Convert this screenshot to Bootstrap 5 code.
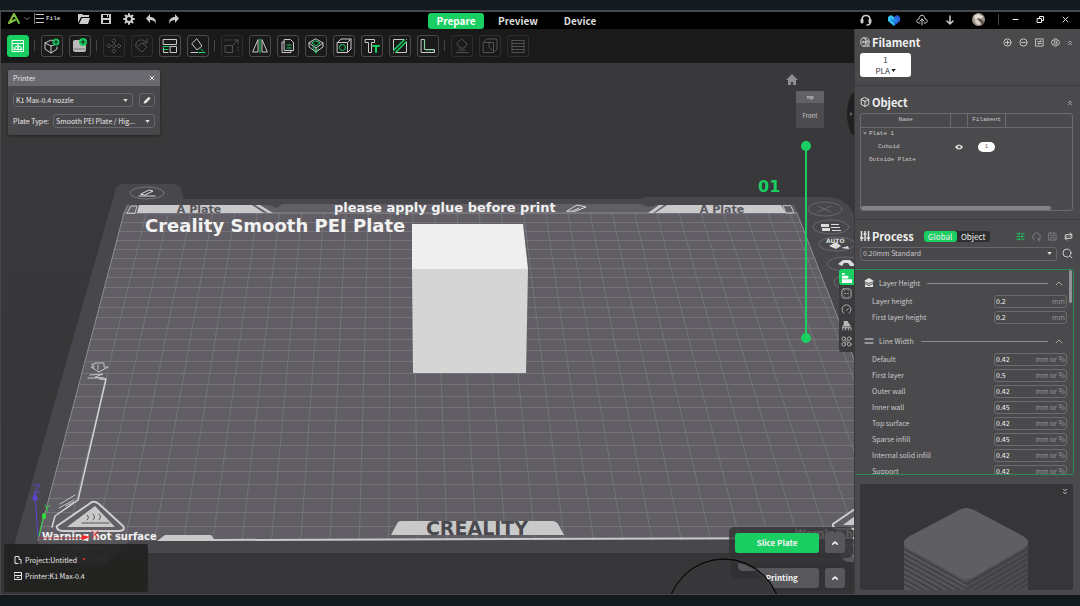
<!DOCTYPE html>
<html lang="en">
<head>
<meta charset="utf-8">
<meta name="viewport" content="width=device-width, initial-scale=1">
<title>Creality Print</title>
<link href="https://cdn.jsdelivr.net/npm/bootstrap@5.3.0/dist/css/bootstrap.min.css" rel="stylesheet">
<style>
:root{--grn:#19cf61;--pan:#4a494c;--lin:#6c6b6f;--txt:#c9c9cb}
body{height:100vh;background:#131a1d;color:#e8e8e8;font:8px/12px "Noto Sans CJK SC","Noto Sans",sans-serif;overflow:hidden;padding:10px 0 11px}
button,input,select{font:inherit;color:inherit}
button{background:none;border:0;padding:0}
svg{display:block;fill:none;stroke-linecap:round;stroke-linejoin:round}
svg:not([stroke]){stroke:currentColor}
.app{border:1px solid #48484a;border-top-width:2px;border-right:0;background:#39383a}
.titlebar{display:grid;grid-template-columns:427px auto 1fr;height:17px;background:#000}
.ti{width:12px;height:12px;color:#ccc}
.mono{font-family:"Liberation Mono",monospace;font-size:6px}
.tab{width:56px;height:16px;font-size:10px;line-height:14px;font-weight:700;border-radius:3px;color:#ddd}
.tab.on{background:var(--grn);color:#fff}
.tools{height:34px;background:#1a1a1a;gap:6px;padding:0 6px 1px}
.tool{width:22px;height:22px;border:1px solid #4b4b4b;border-radius:3px;color:#c9c9c9;flex:none;display:grid;place-items:center}
.tool svg{width:16px;height:16px}
.tool.on{background:var(--grn);border-color:var(--grn);color:#fff}
.tool:disabled{border-color:#2e2e2e;color:#515151}
.sep{width:1px;height:11px;background:#464646;margin-left:-1px;flex:none}
.g{stroke:var(--grn)}
.fw,svg.fw:not([stroke]){fill:currentColor;stroke:none}
.view{background:linear-gradient(#39383a,#363537);min-height:0}
.scene text{font-family:"DejaVu Sans",sans-serif;font-weight:700;stroke:none}
.float{position:absolute}
.printer,.info,.params,.preset{font-size:7px}
.printer{left:7px;top:7px;width:152px;height:65px;background:#48474a;border-radius:2px;box-shadow:0 1px 3px #0006}
.printer header{height:16px;background:#6a696f;padding:0 5px;border-radius:2px 2px 0 0}
.pline{padding:0 5px;margin-top:7px}
.pick{appearance:none;height:14px;border:1px solid #67666a;border-radius:3px;padding:0 10px 0 2px;line-height:11px;min-width:0;background:#48474a url("data:image/svg+xml,%3Csvg xmlns='http://www.w3.org/2000/svg' viewBox='0 0 6 4'%3E%3Cpath fill='%23ddd' d='M0 0h6L3 4z'/%3E%3C/svg%3E") no-repeat right 4px center/5px 3px}
.info{left:3px;bottom:2px;width:144px;height:48px;background:#20201ed9;padding:10px;border-radius:2px}
.info svg{width:8px;height:8px}
.home{right:56px;top:11px;width:12px;height:11px;color:#8e8d91}
.cube{right:30px;top:28px;width:28px;text-align:center;font-size:6px;color:#c5c5c7;background:#4c4b4e}
.cube b{display:block;height:12px;background:#626166;font-size:4px}
.cube span{display:block;height:25px;line-height:25px}
.knob{right:0;top:30px;width:7px;height:42px;overflow:hidden}
.zbar{right:43px;top:78px;width:10px;height:202px}
.zbar input{position:absolute;left:0;top:202px;width:202px;height:10px;margin:0;appearance:none;background:none;transform-origin:0 0;transform:rotate(-90deg);pointer-events:none}
.zbar input::-webkit-slider-runnable-track{height:2px;background:var(--grn)}
.zbar input::-webkit-slider-thumb{appearance:none;width:10px;height:10px;border-radius:50%;background:var(--grn);margin-top:-4px;pointer-events:auto}
.modes{right:0;top:206px;width:15px;background:#3b3a3c;border-radius:3px 0 0 3px;padding-bottom:3px}
.modes button{width:15px;height:16px;display:grid;place-items:center;color:#b9b9bb}
.modes svg{width:11px;height:11px}
.modes .on{background:var(--grn);color:#fff;border-radius:3px 0 0 3px}
.acts{right:1px;bottom:1px;width:124px;gap:4px}
.act{background:#333235cc;border-radius:5px;padding:6px 8px 5px 6px;gap:6px}
.act button{height:20px;border-radius:3px;background:#58575b;font-weight:700;color:#f2f2f2;line-height:14px}
.act .go{background:var(--grn)}
.act .up{width:20px;display:grid;place-items:center}
.up svg{width:6px;height:4px;stroke-width:2}
.ring{right:72px;bottom:0;width:116px;height:36px;pointer-events:none}
.side{width:226px;background:var(--pan);border-left:1px solid #3a393c;color:var(--txt)}
.side h2{font-size:11px;line-height:16px;font-weight:700;margin:0 0 0 2px;color:#f1f1f1}
.hi{width:10px;height:10px;color:#e4e4e4;flex:none}
.si{width:9px;height:9px;color:#cfcfcf}
.sec{padding:0 7px 0 5px}
.rule{border-bottom:1px solid #3e3d40}
.fil{width:51px;height:24px;background:#fff;color:#333;border-radius:3px;line-height:11px}
.objs{height:98px;border:1px solid var(--lin);border-radius:3px}
.objs table{width:100%;border-collapse:collapse;table-layout:fixed}
.objs th{height:13px;font-weight:400;text-align:center;border-right:1px solid var(--lin);border-bottom:1px solid var(--lin);padding:0;line-height:8px}
.objs th:last-child{border-right:0}
.objs td{height:13px;padding:0;line-height:8px}
.chip{display:block;width:17px;height:10px;line-height:10px;border-radius:5px;background:#fff;color:#765;text-align:center;margin:0 auto}
.hbar{width:190px;height:4px;border-radius:2px;background:#858488}
.seg{background:#2f2e30;border-radius:3px;line-height:11px}
.seg button{width:33px;height:11px;border-radius:3px;line-height:9px;color:#eee}
.seg .on{background:var(--grn)}
.params{height:206px;border:1px solid #2d8a50;border-left:0;overflow:hidden;margin-right:6px;border-radius:0 2px 2px 0}
.vbar{right:1px;top:0;width:3px;height:33px;background:#939296;border-radius:2px}
.grp{height:20px;padding:0 10px 0 9px;gap:7px}
.grp hr{margin:0;flex:1;border-color:#8b8a8e;opacity:1}
.grp button{color:#aaa}
.prm{height:16px;padding:0 6px 0 17px}
.val{width:73px;height:13px;border:1px solid var(--lin);border-radius:3px;padding:0 1px;color:#98979b;line-height:11px}
.val input{width:28px;border:0;background:none;padding:0;height:11px;color:#f4f4f4}
.prev{background:#363538;border-radius:3px;margin:9px 7px 4px 5px;min-height:0;overflow:hidden}
</style>
</head>
<body class="d-flex flex-column">
<svg width="0" height="0" class="position-absolute" aria-hidden="true">
<symbol id="dbl" viewBox="0 0 8 8"><path d="M2 4l2-2 2 2M2 7l2-2 2 2"/></symbol>
<symbol id="up" viewBox="0 0 8 5"><path d="M1 4l3-3 3 3"/></symbol>
<symbol id="box" viewBox="0 0 16 16"><path d="M8 1l6 3v8l-6 3-6-3V4zM2 4l6 3 6-3M8 7v8" stroke-width="1.500"/></symbol>
</svg>
<div class="app flex-fill d-flex flex-column overflow-hidden">
<nav class="titlebar">
 <div class="d-flex align-items-center pb-1" style="padding-left:7px">
  <button aria-label="App menu" class="d-flex align-items-center"><svg width="12" height="11" viewBox="0 0 12 11"><path d="M1 10L6 1l5 9M1 10l6-3" stroke="#78c238" stroke-width="2"/><path d="M6 1L1 10" stroke="#b4b24a"/></svg><svg class="ms-1 me-1" width="6" height="5" viewBox="0 0 8 5" stroke="#aaa"><path d="M1 1l3 3 3-3"/></svg></button>
  <button class="d-flex align-items-center mono" style="color:#ccc"><svg width="10" height="11" viewBox="0 0 10 11"><path d="M.5 0v11" stroke="#777"/><path d="M2 1.500h8M2 5.500h8M2 9.500h8" stroke="#ccc"/></svg><b style="margin-left:2px">File</b></button>
  <button aria-label="Open" class="ti" style="margin-left:18px"><svg viewBox="0 0 12 12" class="fw"><path d="M0 1h4l1 1h6v2H3L0 10zM4 5h8l-2 6H1z"/></svg></button>
  <button aria-label="Save" class="ti" style="margin-left:10px"><svg viewBox="0 0 12 12" class="fw"><path fill-rule="evenodd" d="M1 1h10v10H1zM3 2v3h6V2zM3 7v3h6V7zM7 2h1v2H7z"/></svg></button>
  <button aria-label="Settings" class="ti" style="margin-left:11px"><svg viewBox="0 0 12 12"><circle cx="6" cy="6" r="3" stroke-width="2"/><path d="M6 1v1M6 10v1M1 6h1M10 6h1M2.500 2.500l1 1M8.500 8.500l1 1M2.500 9.500l1-1M8.500 3.500l1-1" stroke-width="2"/></svg></button>
  <button aria-label="Undo" class="ti" style="margin-left:10px"><svg viewBox="0 0 12 12" class="fw"><path d="M5 1v3c4 0 6 2 6 7-1-3-3-4-6-4v3L1 5.500z"/></svg></button>
  <button aria-label="Redo" class="ti" style="margin-left:11px"><svg viewBox="0 0 12 12" class="fw"><path d="M7 1v3c-4 0-6 2-6 7 1-3 3-4 6-4v3l4-4.500z"/></svg></button>
 </div>
 <div class="d-flex align-items-center" style="gap:6px"><button class="tab on">Prepare</button><button class="tab">Preview</button><button class="tab">Device</button></div>
 <div class="d-flex align-items-center justify-content-end" style="gap:16px;padding:0 10px 2px 0">
  <button aria-label="Support" class="ti"><svg viewBox="0 0 12 12"><path d="M2 6C2 0 10 0 10 6M10 9c0 1-1 2-3 2" stroke-width="1.500"/><path d="M2 6v2M10 6v2" stroke-width="3"/></svg></button>
  <button aria-label="Cloud" class="ti"><svg viewBox="0 0 12 12" stroke="none"><path fill="#35c3ef" d="M0 3l3-2 3 2 0 9-6-5z"/><path fill="#2b62d8" d="M6 3l3-2 3 2v4l-6 5z"/><path fill="#1a8ce6" d="M3 4l3 2 3-2v3L6 9 3 7z"/></svg></button>
  <button aria-label="Upload" class="ti"><svg viewBox="0 0 12 12"><path d="M4 9H3C0 9 0 5 3 5c0-5 6-5 6 0 3 0 3 4 0 4H8M6 11V5M4 7l2-2 2 2"/></svg></button>
  <button aria-label="Download" class="ti"><svg viewBox="0 0 12 12"><path d="M6 2v8M3 7l3 3 3-3" stroke-width="1.500"/></svg></button>
  <button aria-label="Account"><svg width="13" height="13" viewBox="0 0 14 14" stroke="none"><circle cx="7" cy="7" r="7" fill="#a3978b"/><path d="M2 3l5-2 5 3-2 2-4-1-2 3z" fill="#e4ded7"/><path d="M3 8l3-1 4 3-2 3-3-1z" fill="#d8cec4"/><path d="M6 6l4 1 3 3-2 2-3-3z" fill="#594c43"/></svg></button>
  <span class="sep" style="margin:0 -4px 0 -3px"></span>
  <button aria-label="Minimize"><svg width="9" height="9" viewBox="0 0 9 9" stroke="#fff"><path d="M2 4.500h5"/></svg></button>
  <button aria-label="Restore"><svg width="9" height="9" viewBox="0 0 9 9" stroke="#eee"><path d="M1.500 3.500h4v4h-4zM3.500 3V1.500h4v4H6"/></svg></button>
  <button aria-label="Close"><svg width="9" height="9" viewBox="0 0 9 9" stroke="#ddd"><path d="M2 2l5 5M7 2L2 7"/></svg></button>
 </div>
</nav>
<div class="flex-fill d-flex overflow-hidden">
<main class="flex-fill d-flex flex-column" style="min-width:0">
 <div class="tools d-flex align-items-center">
  <button class="tool on" aria-label="Printer"><svg viewBox="0 0 16 16"><path d="M2.500 2.500h11v11h-11zM3 5.500h10M8 6v2M4 11.500h8"/><path d="M4 10q4-4 8 0-4 4-8 0" /><circle cx="8" cy="10" r="1" class="fw"/></svg></button>
  <span class="sep"></span>
  <button class="tool" aria-label="Add model"><svg viewBox="0 0 16 16"><path d="M9 3L7 2 1 5v6l6 4 6-4V9M1 5l6 3 3-1M7 8v7"/><circle cx="12" cy="4" r="3.500" fill="#19cf61" stroke="none"/><path d="M12 2v4M10 4h4" stroke="#222"/></svg></button>
  <button class="tool" aria-label="Add plate"><svg viewBox="0 0 16 16"><rect x="1" y="2" width="13" height="12" rx="2" fill="#bbb" stroke="none"/><path d="M2 11h11" stroke="#777"/><circle cx="11" cy="4" r="4" fill="#19cf61" stroke="none"/><path d="M11 2v4M9 4h4" stroke="#222"/></svg></button>
  <span class="sep"></span>
  <button class="tool" disabled aria-label="Move"><svg viewBox="0 0 16 16"><path d="M8 1l2 2-2 2-2-2zM8 11l2 2-2 2-2-2zM3 6l2 2-2 2-2-2zM13 6l2 2-2 2-2-2zM8 6l2 2-2 2-2-2z"/></svg></button>
  <button class="tool" disabled aria-label="Rotate"><svg viewBox="0 0 16 16"><path d="M8 5l5 4-5 5-5-4zM2 9c-2-6 6-10 10-5M13 1v4H9"/></svg></button>
  <button class="tool" aria-label="Arrange"><svg viewBox="0 0 16 16"><path d="M1.500 1.500h13v5h-13zM8.500 8.500h6v6h-6zM1.500 10v4.500H6"/><path class="g" d="M1 8.500h6M1 11.500h5" /></svg></button>
  <button class="tool" aria-label="Lay flat"><svg viewBox="0 0 16 16"><path d="M7 1l5 7-5 4-5-6zM1 14.500h8"/><path class="g" d="M8 14.500h7M11 11l2 2"/></svg></button>
  <span class="sep"></span>
  <button class="tool" disabled aria-label="Scale"><svg viewBox="0 0 16 16"><path d="M1.500 7.500h7v7h-7zM9 7l5-5M10 2h4v4"/><path d="M1 2h7M14 9v6" stroke-dasharray="1 2"/></svg></button>
  <button class="tool" aria-label="Mirror"><svg viewBox="0 0 16 16"><path d="M6 2v12H1zM10 2v12h5z"/><path class="g" d="M8 1v14"/></svg></button>
  <button class="tool" aria-label="Clone"><svg viewBox="0 0 16 16"><path d="M4.500 1.500h6l3 3v8h-9zM4 4H2v10.500h9V13"/><path class="g" d="M7 7h4M7 10h4"/></svg></button>
  <button class="tool" aria-label="Split"><svg viewBox="0 0 16 16"><path d="M8 1l7 4-7 5-7-5zM1 5v4l7 5 7-5V5M8 10v4"/><path class="g" d="M8 3l4 2-4 3-4-3zM5 9l2 5M10 11l-2 4"/></svg></button>
  <button class="tool" aria-label="Hollow"><svg viewBox="0 0 16 16"><path d="M1.500 4.500h10v10h-10zM2 4l3-3h10v10l-3 3M12 4l3-3"/><circle class="g" cx="6.500" cy="9.500" r="3"/></svg></button>
  <button class="tool" aria-label="Text"><svg viewBox="0 0 16 16"><path d="M1.500 1.500h9v3h-3v10h-3v-10h-3z"/><path class="g" d="M9 8h6M12 8v6" stroke-width="2"/></svg></button>
  <button class="tool" aria-label="Cut"><svg viewBox="0 0 16 16"><path d="M1.500 12V1.500H12M4 14.500h10.500V4M1.500 14.500v0M14.500 1.500v0"/><path class="g" d="M2 12L12 2M4 14L14 4" stroke-width="1.500"/></svg></button>
  <button class="tool" aria-label="Measure"><svg viewBox="0 0 16 16"><path d="M1.500 1.500h3v10h10v3h-13z"/><path class="g" d="M4 4h1M4 7h1M4 10h1M7 12v1M10 12v1M13 12v1"/></svg></button>
  <span class="sep"></span>
  <button class="tool" disabled aria-label="Supports"><svg viewBox="0 0 16 16"><path d="M8 1l5 5-3 4H6L3 6zM5 12h6M2 14.500h12"/></svg></button>
  <button class="tool" disabled aria-label="Seam"><svg viewBox="0 0 16 16"><path d="M1.500 4.500h10v10h-10zM2 4l3-3h10v10l-3 3M7 4v5l3 3"/></svg></button>
  <button class="tool" disabled aria-label="Layers"><svg viewBox="0 0 16 16"><path d="M2 2.500h12M2 5.500h12M2 8.500h12M2 11.500h12M2 14.500h12M2 2v12M14 2v12"/></svg></button>
 </div>
 <div class="view flex-fill position-relative overflow-hidden">
  <svg class="scene position-absolute w-100 h-100" viewBox="1 63 853 531" preserveAspectRatio="xMidYMin slice">
   <path d="M116 188Q118 184 125 184H174Q183 185 183 199H640L645 197H826Q846 197 853 213L990 553H28Q12 552 16 538Z" fill="#48474b" stroke="none"/>
   <path d="M124 213L128 205H270L277 208Q281 204 283 204H641L648 207 657 205H794L797 213 924 539 38 541Z" fill="#615f65" stroke="none"/>
   <g id="grid" stroke="#7a797e"></g>
   <path d="M38 540L124 213 128 205M797 213L924 539M124 213H797" stroke="#8d8c91"/>
   <g fill="#c9c9ca" stroke="none">
    <path d="M139 205H252L264 213H137zM255 205h5l13 8h-5zM667 205H781L786 213H655zM659 205h5l-11 8h-5z"/>
    <path d="M398 522Q399 521 402 521H552Q556 521 558 524L564 535H391zM157 541L165 535H211L214 539 854 537V539L214 541z"/>
   </g>
   <path d="M127 213l4-7h6l-2 7zM783 206l3 7h8l-3-7z" stroke="#c2c2c4"/>
   <g fill="#55545a"><text x="199" y="213" font-size="11" text-anchor="middle">A Plate</text><text x="722" y="213" font-size="11" text-anchor="middle">A Plate</text><text x="477" y="535" font-size="19" text-anchor="middle" fill="#4a494e">CREALITY</text></g>
   <g fill="#f2f2f2"><text x="334" y="212" font-size="13">please apply glue before print</text><text x="145" y="232" font-size="18">Creality Smooth PEI Plate</text><text x="42" y="540" font-size="10">Warning hot surface</text><text x="795" y="537" font-size="10">Warning h</text></g>
   <path d="M567 211l10-6 9 2-10 4zM573 211l6-3" stroke="#ddd"/>
   <text x="758" y="192" font-size="16" fill="#19cf61">01</text>
   <path d="M412 224H523L528 269H412z" fill="#eeefee" stroke="none"/><path d="M412 269H528L526 373H413z" fill="#d5d5d5" stroke="none"/>
   <ellipse cx="147" cy="193" rx="17" ry="6" stroke="#77767b"/><path d="M139 196h16M141 194l8-4 4 1-8 4z" stroke="#ddd"/>
   <path d="M100 379h6L78 500 55 516 52 527" stroke="#d2d2d3" stroke-width="1.500"/><path d="M92 364l3 0 0-1h9v4h4l-9 5-8-5h3zM98 365v4M90 375l13-1-8 3 9 1M88 378h12M60 504l15-9M59 508l15-8M66 506l8-4" stroke="#c5c5c8"/>
   <g id="warn"><path d="M92 502q3-1 7 2l24 22q3 5-5 5H62q-6-1-5-5z" fill="#615f65" stroke="#cfcfd0" stroke-width="2"/><path d="M95 506l20 21H67z" fill="#c9c9ca" stroke="none"/><path d="M87 515q3 2 0 5M93 514q3 3 0 6M99 514q3 3 0 6M82 523h27" stroke="#555"/></g>
   <use href="#warn" x="776" y="-2"/>
   <path d="M38 541H129L108 562Q106 565 102 565H52Q49 565 47 561z" fill="#56555a" stroke="none"/><path d="M52 548h58l-7 11H58zM64 555q3-9 16-9t16 9M68 557q2-8 12-8t11 8M72 558q1-6 8-6t7 6M77 558q2-4 5 0" stroke="#77767b"/>
   <path d="M826 539h28v23h-5q-4 0-6-3z" fill="#58575c" stroke="none"/><path d="M844 545h10M844 545l10 12" stroke="#8888a0"/>
   <path d="M38 536L35 495" stroke="#5a45d8"/><path d="M35 492l3 8h-6z" fill="#5a45d8" stroke="none"/><path d="M34 485h6l-6 7h6" stroke="#5a45d8"/>
   <path d="M39 536l4-18" stroke="#2fd43c"/><ellipse cx="44" cy="516" rx="2" ry="3" fill="#2fe03c" stroke="none"/><path d="M45 505l2 3 3-3M47 508v4" stroke="#2fd43c"/>
   <path d="M39 538h45" stroke="#a33"/><path d="M82 535l8 2-8 3z" fill="#f22" stroke="none"/><path d="M92 531l6 7M98 531l-6 7" stroke="#f22"/>
   <g stroke="#68676c"><ellipse cx="825" cy="209" rx="17" ry="7"/><ellipse cx="831" cy="227" rx="18" ry="7"/><ellipse cx="837" cy="244" rx="18" ry="7"/><ellipse cx="845" cy="264" rx="18" ry="7"/><ellipse cx="852" cy="282" rx="18" ry="8"/><path d="M818 206l13 6M831 206l-13 6"/></g>
   <g fill="#dcdcdc" stroke="none"><path d="M821 224h8v3h-8zM822 228h8v3h-8zM831 224h8v1h-8zM831 227h9v1h-9zM832 230h9v1h-9zM829 246l7-4 5 4-5 3zM841 248l7-2 1 3zM838 264l5-4h7l4 4v2h-4l-2-3h-4l-2 3z"/><text x="826" y="243" font-size="6">AUTO</text></g>
  </svg>

  <section class="float printer">
   <header class="d-flex align-items-center justify-content-between"><span>Printer</span><button aria-label="Close panel"><svg width="6" height="6" viewBox="0 0 6 6"><path d="M1 1l4 4M5 1L1 5"/></svg></button></header>
   <div class="pline d-flex" style="gap:6px"><select class="pick flex-fill" aria-label="Printer model"><option>K1 Max-0.4 nozzle</option></select><button class="pick p-0" aria-label="Edit printer" style="background:none;width:16px"><svg viewBox="0 0 16 12"><path class="fw" d="M4 10l1-3 5-5 2 2-5 5z"/></svg></button></div>
   <div class="pline d-flex align-items-center" style="gap:4px"><label class="text-nowrap" for="pt">Plate Type:</label><select id="pt" class="pick flex-fill" style="width:0"><option>Smooth PEI Plate / Hig...</option></select></div>
  </section>

  <svg class="float home" viewBox="0 0 12 11"><path class="fw" d="M6 0l6 6h-2v5H7V8H5v3H2V6H0z"/></svg>
  <div class="float cube"><b>Top</b><span>Front</span></div>
  <svg class="float knob" viewBox="0 0 7 42"><ellipse cx="12" cy="21" rx="12" ry="25" fill="#202022" stroke="none"/><path d="M3 19l3 2-3 2z" fill="#666" stroke="none"/></svg>
  <div class="float zbar"><input type="range" min="0" max="100" value="100" aria-label="Top layer"><input type="range" min="0" max="100" value="0" aria-label="Bottom layer"></div>
  <div class="float modes">
   <button class="on" aria-label="Quality"><svg viewBox="0 0 12 12" class="fw"><path d="M1 1h3v2H1zM1 4h7v3H1zM1 8h11v4H1z"/></svg></button>
   <button aria-label="Strength"><svg viewBox="0 0 12 12"><rect x="1" y="1" width="10" height="10" rx="2"/><path d="M4 3v0M8 3v0M4 6h1M7 6h1M4 9v0M8 9v0"/></svg></button>
   <button aria-label="Speed"><svg viewBox="0 0 12 12"><path d="M3 10C-1 6 2 1 6 1s7 5 3 9M6 7l2-2"/></svg></button>
   <button aria-label="Support"><svg viewBox="0 0 12 12"><path class="fw" d="M3 1h4l4 6H1l2-2zM1 8h10v1H1z"/><path d="M2 8v3M5 8v3M8 8v3M11 9v2"/></svg></button>
   <button aria-label="Others"><svg viewBox="0 0 12 12"><circle cx="3" cy="3" r="2"/><circle cx="9" cy="3" r="2"/><circle cx="3" cy="9" r="2"/><circle cx="9" cy="9" r="2"/><path d="M5 5l2 2M7 5L5 7"/></svg></button>
  </div>
  <section class="float info d-flex flex-column" style="gap:4px">
   <div class="d-flex align-items-center" style="gap:3px"><svg viewBox="0 0 8 8"><path d="M4 7.500H1v-7h4v3h2v4"/></svg><span>Project:Untitled</span><b style="color:#f33;line-height:8px" class="mb-1">·</b></div>
   <div class="d-flex align-items-center" style="gap:3px"><svg viewBox="0 0 8 8"><path d="M.5.500h7v7h-7zM1 3.500h6M3 5.500h2"/></svg><span>Printer:K1 Max-0.4</span></div>
  </section>
  <div class="float acts d-flex flex-column">
   <div class="act d-flex"><button class="go flex-fill">Slice Plate</button><button class="up" aria-label="Slice options"><svg viewBox="0 0 8 5"><use href="#up"/></svg></button></div>
   <div class="act d-flex"><button class="flex-fill">AI Printing</button><button class="up" aria-label="Print options"><svg viewBox="0 0 8 5"><use href="#up"/></svg></button></div>
  </div>
  <svg class="float ring" viewBox="0 0 116 36"><circle cx="58" cy="58" r="57" fill="#373638" stroke="#080808"/><path d="M65 3q18 2 31 17H69q-4-1-4-5z" fill="#302f32" stroke="none"/><path d="M72 5q10 2 18 8H76q-4-1-4-4z" fill="#58575b" stroke="none"/><circle cx="58" cy="58" r="57" stroke="#080808"/></svg>
 </div>
</main>

<aside class="side d-flex flex-column flex-shrink-0">
 <section class="sec rule" style="height:57px;padding-top:5px">
  <div class="d-flex align-items-center"><svg class="hi" viewBox="0 0 12 12"><ellipse cx="4" cy="6" rx="3" ry="5"/><circle cx="4" cy="6" r="1"/><path d="M4 1h4c4 1 4 9 0 10H4M7 3l3 2M7 6h4M7 8l3 1M9 11h3"/></svg><h2>Filament</h2>
   <div class="d-flex align-items-center ms-auto" style="gap:7px">
    <button aria-label="Add filament"><svg class="si" viewBox="0 0 10 10"><circle cx="5" cy="5" r="4"/><path d="M5 3v4M3 5h4"/></svg></button>
    <button aria-label="Remove filament"><svg class="si" viewBox="0 0 10 10"><circle cx="5" cy="5" r="4"/><path d="M3 5h4"/></svg></button>
    <button aria-label="Filament mapping"><svg class="si" viewBox="0 0 10 10"><path d="M1 1h8v8H1zM3 4h4L6 3M7 6H3l1 1"/></svg></button>
    <button aria-label="Filament settings"><svg class="si" viewBox="0 0 10 10"><path d="M4 1h2l.5 1.500 2 0L9.500 5 8.500 7.500 6.500 7.500 6 9H4l-.5-1.500-2 0L.5 5l1-2.500h2z"/><circle cx="5" cy="5" r="1.500"/></svg></button>
    <button aria-label="Collapse filament"><svg width="6" height="7"><use href="#dbl"/></svg></button></div></div>
  <button class="fil" style="margin-top:3px">1<br>PLA <svg class="d-inline-block" width="5" height="3" viewBox="0 0 6 4" style="vertical-align:2px;margin-left:-1px"><path d="M0 0h6L3 4z" fill="#222" stroke="none"/></svg></button>
 </section>
 <section class="sec rule" style="padding-top:8px;height:134px">
  <div class="d-flex align-items-center" style="margin-bottom:3px"><svg class="hi"><use href="#box"/></svg><h2>Object</h2><button class="ms-auto" aria-label="Collapse objects"><svg width="6" height="7"><use href="#dbl"/></svg></button></div>
  <div class="objs mono d-flex flex-column justify-content-between">
   <table><colgroup><col style="width:42.500%"><col style="width:8%"><col style="width:18%"><col></colgroup>
    <thead><tr><th>Name</th><th></th><th>Filament</th><th></th></tr></thead>
    <tbody><tr><td style="padding-left:2px"><svg class="d-inline-block" width="4" height="3" viewBox="0 0 6 4" style="margin-right:2px"><path d="M0 0h6L3 4z" fill="#999" stroke="none"/></svg>Plate 1</td><td></td><td></td><td></td></tr>
    <tr><td style="padding-left:17px">Cuboid</td><td><svg class="mx-auto" width="8" height="6" viewBox="0 0 8 6"><path d="M0 3q4-5 8 0-4 5-8 0z" fill="#eee" stroke="none"/><circle cx="4" cy="3" r="1" stroke="#333"/></svg></td><td><span class="chip">1</span></td><td></td></tr>
    <tr><td style="padding-left:8px">Outside Plate</td><td></td><td></td><td></td></tr></tbody></table>
   <div class="hbar"></div>
  </div>
 </section>
 <section class="sec" style="padding-top:8px">
  <div class="d-flex align-items-center"><svg class="hi" viewBox="0 0 10 10" stroke-width="1.500"><path d="M1.500 0v10M5 0v10M8.500 0v10M0 7h3M4 3h2M7 7h3"/></svg><h2>Process</h2><span class="sep" style="margin:0 5px 0 4px"></span><div class="seg d-flex"><button class="on">Global</button><button>Object</button></div>
   <div class="d-flex align-items-center ms-auto" style="gap:7px">
    <button aria-label="Compare"><svg class="si" viewBox="0 0 10 10" style="color:#19cf61"><path d="M1 2h3M6 2h3M1 5h3M6 5h3M1 8h3M6 8h3M4 1v2M6 4v2M4 7v2"/></svg></button>
    <button aria-label="Reset"><svg class="si" viewBox="0 0 10 10" style="color:#858488"><path d="M3 9C-1 7 1 1 5 1s6 6 2 8M7 7v2h2"/></svg></button>
    <button aria-label="Save process"><svg class="si" viewBox="0 0 10 10" style="color:#7c7b80"><path d="M1 1h7l1 1v7H1zM3 1v3h4V1M3 9V6h4v3"/></svg></button>
    <button aria-label="Transfer"><svg class="si" viewBox="0 0 10 10" style="color:#eee"><path d="M1 5l1-2h6M7 1l2 2-2 2M9 5L8 7H2M3 5L1 7l2 2"/></svg></button></div></div>
  <div class="preset d-flex align-items-center" style="margin-top:2px;gap:5px;height:15px"><select class="pick flex-fill" aria-label="Process preset"><option>0.20mm Standard</option></select><button aria-label="Search"><svg width="11" height="11" viewBox="0 0 11 11"><circle cx="5" cy="5" r="4"/><path d="M8 8l2 2"/></svg></button></div>
 </section>
 <section class="params position-relative" style="margin-top:8px;padding-top:3px">
  <div class="float vbar"></div>
  <div class="grp d-flex align-items-center"><svg class="hi" viewBox="0 0 10 10"><path class="fw" d="M5 0l5 3-5 2-5-2zM1 4l4 2 4-2v1L5 7 1 5zM1 6l4 2 4-2v3H1z"/></svg><span style="margin-left:-2px">Layer Height</span><hr><button aria-label="Collapse layer height"><svg width="8" height="5"><use href="#up"/></svg></button></div>
  <div id="lh"></div>
  <div class="grp d-flex align-items-center" style="margin-top:6px"><svg class="hi" viewBox="0 0 10 10"><path d="M1 3h8M1 7h8"/></svg><span style="margin-left:-2px">Line Width</span><hr><button aria-label="Collapse line width"><svg width="8" height="5"><use href="#up"/></svg></button></div>
  <div id="lw"></div>
 </section>
 <section class="prev flex-fill position-relative">
  <button class="float" style="right:5px;top:4px" aria-label="Collapse preview"><svg width="6" height="7" viewBox="0 0 8 8" stroke="#eee"><path d="M2 1l2 2 2-2M2 5l2 2 2-2"/></svg></button>
  <svg class="w-100 h-100" viewBox="0 0 213 106" preserveAspectRatio="xMidYMin slice" stroke="none"><path d="M44 56V106H168V56z" fill="#4c4b4e"/><path d="M44 60L107 96V106H44z" fill="#555457"/><path d="M44 65L107 100 168 65M44 70L107 105 168 70M44 75L100 106M168 75L114 106M44 80L91 106M168 80L123 106M44 85L82 106M168 85L132 106M44 90L73 106M168 90L141 106M44 95L64 106M168 95L150 106M44 100L55 106M168 100L158 106" stroke="#403f42" stroke-width="1.500"/><path d="M99 26Q106 22 114 26L163 52Q173 58 164 64L114 93Q107 97 100 93L48 64Q40 59 48 53z" fill="#5f5e61"/></svg>
 </section>
</aside>
</div>
</div>
<script src="https://cdn.jsdelivr.net/npm/bootstrap@5.3.0/dist/js/bootstrap.bundle.min.js"></script>
<script>
const rows = (id, unit, list) => {
  document.getElementById(id).innerHTML = list.map(([name, v], i) =>
    `<div class="prm d-flex align-items-center justify-content-between"><label for="${id}${i}">${name}</label><div class="val d-flex align-items-center justify-content-between"><input id="${id}${i}" value="${v}"><span>${unit}</span></div></div>`).join('');
};
rows('lh', 'mm', [['Layer height', '0.2'], ['First layer height', '0.2']]);
rows('lw', 'mm or %', [['Default', '0.42'], ['First layer', '0.5'], ['Outer wall', '0.42'], ['Inner wall', '0.45'], ['Top surface', '0.42'], ['Sparse infill', '0.45'], ['Internal solid infill', '0.42'], ['Support', '0.42']]);

// Build-plate grid: columns converge on a vanishing point above the plate
const top0 = 213, bottom = 540, vx = 396, vy = -813;
let d = '';
for (let k = 1; k <= 30; k++) {
  const x = 124 + 22.2 * k, xb = vx + (x - vx) * (bottom - vy) / (top0 - vy);
  d += `M${x} ${top0}L${xb} ${bottom}`;
}
for (const y of [222, 231, 240, 249, 258, 268, 277, 287, 297, 307, 317, 328, 339, 350, 361, 373, 384, 396, 407, 420, 432, 445, 458, 471, 484, 498, 512, 526])
  d += `M${124 - .265 * (y - top0)} ${y + .5}L${797 + .391 * (y - top0)} ${y + .5}`;
document.getElementById('grid').innerHTML = `<path d="${d}" stroke-width=".8"/>`;
</script>
</body>
</html>
